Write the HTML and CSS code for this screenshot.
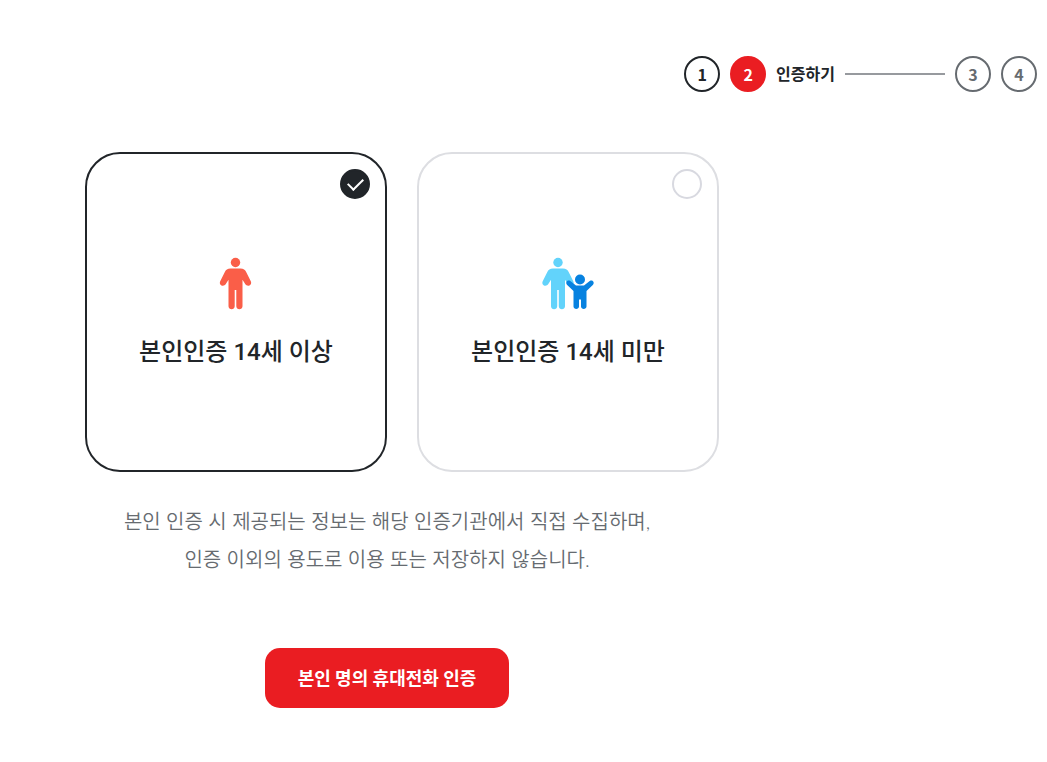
FILE: index.html
```html
<!DOCTYPE html>
<html lang="ko">
<head>
    <meta charset="UTF-8">
    <meta name="viewport" content="width=device-width, initial-scale=1.0">
    <title>인증하기</title>
    <link rel="stylesheet" href="styles.css">
</head>
<body>
    <ol class="steps">
        <li class="step done"><span class="num">1</span></li>
        <li class="step current" aria-current="step"><span class="num">2</span><span class="step-name">인증하기</span></li>
        <li class="step"><span class="num">3</span></li>
        <li class="step"><span class="num">4</span></li>
    </ol>

    <form class="verify">
        <div class="cards">
            <label class="card">
                <input type="radio" name="age" value="over14" class="check" checked>
                <svg class="icon" width="60" height="60" viewBox="0 0 60 60" aria-hidden="true">
                    <g fill="#fa5e48">
                        <circle cx="29.500" cy="8.500" r="4.700"/>
                        <path d="M24.500 14.500h10c3 0 4.600 1.300 5.800 3.700l4.500 9c1.800 4-3.500 6.300-5.600 2.800l-2.700-4.200V52.300c0 3.800-6.200 3.800-6.200 0V36h-1.600V52.300c0 3.800-6.200 3.800-6.200 0V25.800L19.800 30c-2.100 3.500-7.400 1.200-5.600-2.800l4.500-9c1.200-2.400 2.800-3.700 5.800-3.700z"/>
                    </g>
                </svg>
                <span class="card-title">본인인증 14세 이상</span>
            </label>
            <label class="card">
                <input type="radio" name="age" value="under14" class="check">
                <svg class="icon" width="60" height="60" viewBox="0 0 60 60" aria-hidden="true">
                    <g fill="#62d3fb">
                        <circle cx="20" cy="8.500" r="4.700"/>
                        <path d="M15 14.500h10c3 0 4.600 1.300 5.800 3.700l4.500 9c1.800 4-3.500 6.300-5.600 2.800l-2.700-4.200V52.300c0 3.800-6.200 3.800-6.200 0V36h-1.600V52.300c0 3.800-6.200 3.800-6.200 0V25.800L10.300 30c-2.100 3.500-7.400 1.200-5.600-2.800l4.500-9c1.200-2.400 2.800-3.700 5.800-3.700z"/>
                    </g>
                    <g fill="#0782e0">
                        <circle cx="42" cy="25.500" r="5"/>
                        <path d="M32.300 27l5.700 4.500h8l5.700-4.500c3-1.900 5.400 1.800 3.100 4L48.500 37V52.500c0 3.300-5.500 3.300-5.500 0V45.500h-2v7c0 3.300-5.500 3.300-5.500 0V37L29.200 31c-2.300-2.200.1-5.900 3.100-4z"/>
                    </g>
                </svg>
                <span class="card-title">본인인증 14세 미만</span>
            </label>
        </div>

        <p class="notice">본인 인증 시 제공되는 정보는 해당 인증기관에서 직접 수집하며,<br>인증 이외의 용도로 이용 또는 저장하지 않습니다.</p>

        <button type="button" class="submit">본인 명의 휴대전화 인증</button>
    </form>
</body>
</html>
```

FILE: styles.css
```css
* {
    box-sizing: border-box;
}

body {
    margin: 0;
    padding: 56px 10px 54px;
    background: #fff;
    color: #212529;
    font-family: Lato, "Noto Sans CJK KR", sans-serif;
}

/* step indicator */
.steps {
    display: flex;
    justify-content: flex-end;
    gap: 10px;
    margin: 0 0 60px;
    padding: 0;
    list-style: none;
}

.step {
    display: flex;
    align-items: center;
    gap: 10px;
    color: #666b70;
}

.num {
    display: flex;
    align-items: center;
    justify-content: center;
    width: 36px;
    height: 36px;
    border: 2px solid #666b70;
    border-radius: 50%;
    font-family: "Noto Sans CJK KR", sans-serif;
    font-size: 16px;
    font-weight: 700;
    line-height: 20px;
}

.done .num {
    border-color: #212529;
    color: #212529;
}

.current .num {
    border-color: #ea1d22;
    background: #ea1d22;
    color: #fff;
}

.step-name {
    color: #212529;
    font-size: 16px;
    font-weight: 700;
    line-height: 24px;
}

.current::after {
    content: "";
    width: 100px;
    height: 2px;
    background: #979a9e;
}

/* verification form */
.verify {
    max-width: 634px;
    margin-left: 60px;
}

.cards {
    display: flex;
    gap: 30px;
    margin: 0 -15px 30px 15px;
}

.card {
    display: flex;
    flex: 1;
    flex-direction: column;
    align-items: center;
    min-height: 320px;
    padding: 15px;
    border: 2px solid #dddee2;
    border-radius: 35px;
    cursor: pointer;
}

.card:has(.check:checked) {
    border-color: #212529;
}

.check {
    display: flex;
    align-items: center;
    justify-content: center;
    align-self: flex-end;
    width: 30px;
    height: 30px;
    margin: 0 0 55px;
    border: 2px solid #d8d9e0;
    border-radius: 50%;
    appearance: none;
    cursor: pointer;
}

.check:checked {
    border-color: #212529;
    background: #212529;
}

.check:checked::after {
    content: "";
    width: 13px;
    height: 7px;
    margin-bottom: 4px;
    border: solid #fff;
    border-width: 0 0 2px 2px;
    transform: rotate(-45deg);
}

.card-title {
    margin-top: 20px;
    font-family: Roboto, "Noto Sans CJK KR", sans-serif;
    font-size: 24px;
    font-weight: 500;
    line-height: 36px;
}

.notice {
    margin: 0 0 70px;
    color: #666b70;
    font-size: 20px;
    font-weight: 350;
    line-height: 38px;
    text-align: center;
}

.submit {
    display: block;
    height: 60px;
    margin: 0 auto;
    padding: 0 33px 3px;
    border: none;
    border-radius: 15px;
    background: #ea1d22;
    color: #fff;
    font-family: inherit;
    font-size: 18px;
    font-weight: 700;
    cursor: pointer;
}
```
